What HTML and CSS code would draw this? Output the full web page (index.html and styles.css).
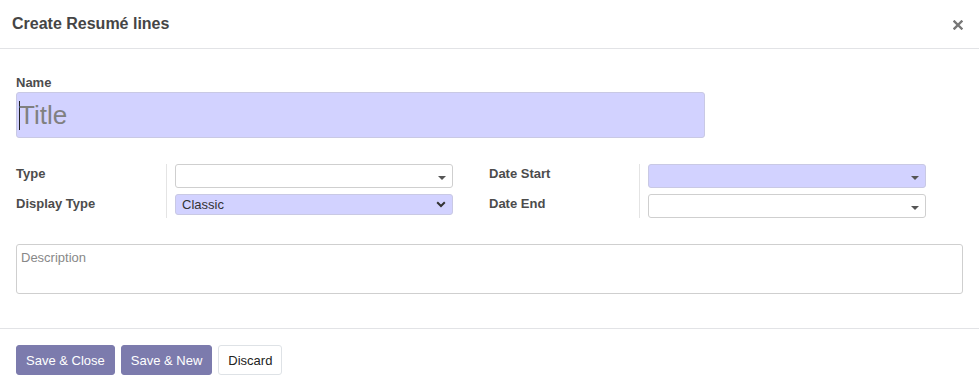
FILE: index.html
```html
<!DOCTYPE html>
<html>
<head>
    <title>Create Resumé lines</title>
    <link rel="stylesheet" href="styles.css">
</head>
<body>
    <div class="modal">
        <!-- header -->
        <div class="modal-header">
            <div class="modal-title">Create Resumé lines</div>
            <div class="modal-close">
                <svg width="10" height="10" viewBox="0 0 10 10"><path d="M1.5 1.5 L8.5 8.5 M8.5 1.5 L1.5 8.5" stroke="#777" stroke-width="2.4" stroke-linecap="square"/></svg>
            </div>
        </div>

        <!-- body -->
        <div class="modal-body">
            <div class="field-label">Name</div>
            <div class="title-input"><span class="cursor"></span><span class="placeholder">Title</span></div>

            <div class="group">
                <div class="group-col">
                    <div class="label-cell">
                        <div class="row-label">Type</div>
                        <div class="row-label">Display Type</div>
                    </div>
                    <div class="input-cell">
                        <div class="select"><span class="caret"></span></div>
                        <div class="select select-sm required">
                            <span>Classic</span>
                            <svg width="10" height="7" viewBox="0 0 10 7"><path d="M1.2 1.3 L5 5 L8.8 1.3" fill="none" stroke="#333" stroke-width="2"/></svg>
                        </div>
                    </div>
                </div>
                <div class="group-col">
                    <div class="label-cell">
                        <div class="row-label">Date Start</div>
                        <div class="row-label">Date End</div>
                    </div>
                    <div class="input-cell">
                        <div class="select required"><span class="caret"></span></div>
                        <div class="select"><span class="caret"></span></div>
                    </div>
                </div>
            </div>

            <div class="textarea"><span class="textarea-placeholder">Description</span></div>
        </div>

        <!-- footer -->
        <div class="modal-footer">
            <button class="btn btn-primary">Save &amp; Close</button>
            <button class="btn btn-primary">Save &amp; New</button>
            <button class="btn btn-secondary">Discard</button>
        </div>
    </div>
</body>
</html>
```

FILE: styles.css
```css
body {
    font-family: "Liberation Sans", Arial, sans-serif;
    margin: 0;
    padding: 0;
    background: #fff;
    color: #4c4c4c;
}
.modal {
    width: 979px;
    height: 391px;
    display: flex;
    flex-direction: column;
}
.modal-header {
    height: 48px;
    padding: 0 12px;
    display: flex;
    align-items: center;
    justify-content: space-between;
    border-bottom: 1px solid #e2e3e6;
}
.modal-title {
    font-size: 16px;
    font-weight: bold;
    color: #454545;
}
.modal-close {
    display: flex;
    margin-right: 4px;
    margin-top: 1px;
}
.modal-body {
    padding: 26px 16px 0 16px;
    height: 253px;
    border-bottom: 1px solid #e2e3e6;
}
.field-label {
    font-size: 13px;
    font-weight: bold;
    line-height: 15px;
    color: #4c4c4c;
}
.title-input {
    margin-top: 2px;
    width: 686px;
    height: 44px;
    background: #d2d2ff;
    border: 1px solid #c9c9e4;
    border-radius: 3px;
    display: flex;
    align-items: center;
    padding-left: 1px;
}
.cursor {
    width: 1px;
    height: 29px;
    background: #222;
    margin-right: -1px;
    margin-left: 1px;
}
.placeholder {
    font-size: 26px;
    color: #808080;
    margin-top: 1px;
}
.group {
    margin-top: 26px;
    display: flex;
    gap: 36px;
}
.group-col {
    display: flex;
    width: 437px;
}
.label-cell {
    width: 150px;
    border-right: 1px solid #e4e4e4;
    padding-bottom: 4px;
    display: flex;
    flex-direction: column;
    gap: 15px;
}
.row-label {
    font-size: 13px;
    font-weight: bold;
    line-height: 15px;
    color: #4c4c4c;
    margin-top: 2px;
}
.row-label + .row-label {
    margin-top: 0;
}
.input-cell {
    margin-left: 8px;
    width: 278px;
    display: flex;
    flex-direction: column;
    gap: 6px;
}
.select {
    height: 22px;
    border: 1px solid #cfcfcf;
    border-radius: 3px;
    background: #fff;
    display: flex;
    align-items: center;
    justify-content: flex-end;
    padding: 0 6px 0 6px;
}
.select.required {
    background: #d2d2ff;
    border-color: #c9c9e4;
}
.select-sm {
    height: 19px;
    justify-content: space-between;
    font-size: 13px;
    color: #333;
}
.caret {
    width: 0;
    height: 0;
    border-left: 4px solid transparent;
    border-right: 4px solid transparent;
    border-top: 4px solid #555;
    margin-top: 3px;
}
.textarea {
    margin-top: 26px;
    height: 50px;
    box-sizing: border-box;
    border: 1px solid #cfcfcf;
    border-radius: 3px;
    padding: 3px 4px;
}
.textarea-placeholder {
    font-size: 13px;
    color: #888;
}
.modal-footer {
    padding: 16px 16px;
    display: flex;
    gap: 6px;
}
.btn {
    font-family: "Liberation Sans", Arial, sans-serif;
    font-size: 13px;
    height: 30px;
    padding: 0 9px;
    border-radius: 3px;
    cursor: pointer;
}
.btn-primary {
    background: #7c7bad;
    border: 1px solid #7c7bad;
    color: #fff;
}
.btn-secondary {
    background: #fff;
    border: 1px solid #dee2e6;
    color: #222;
}
```
